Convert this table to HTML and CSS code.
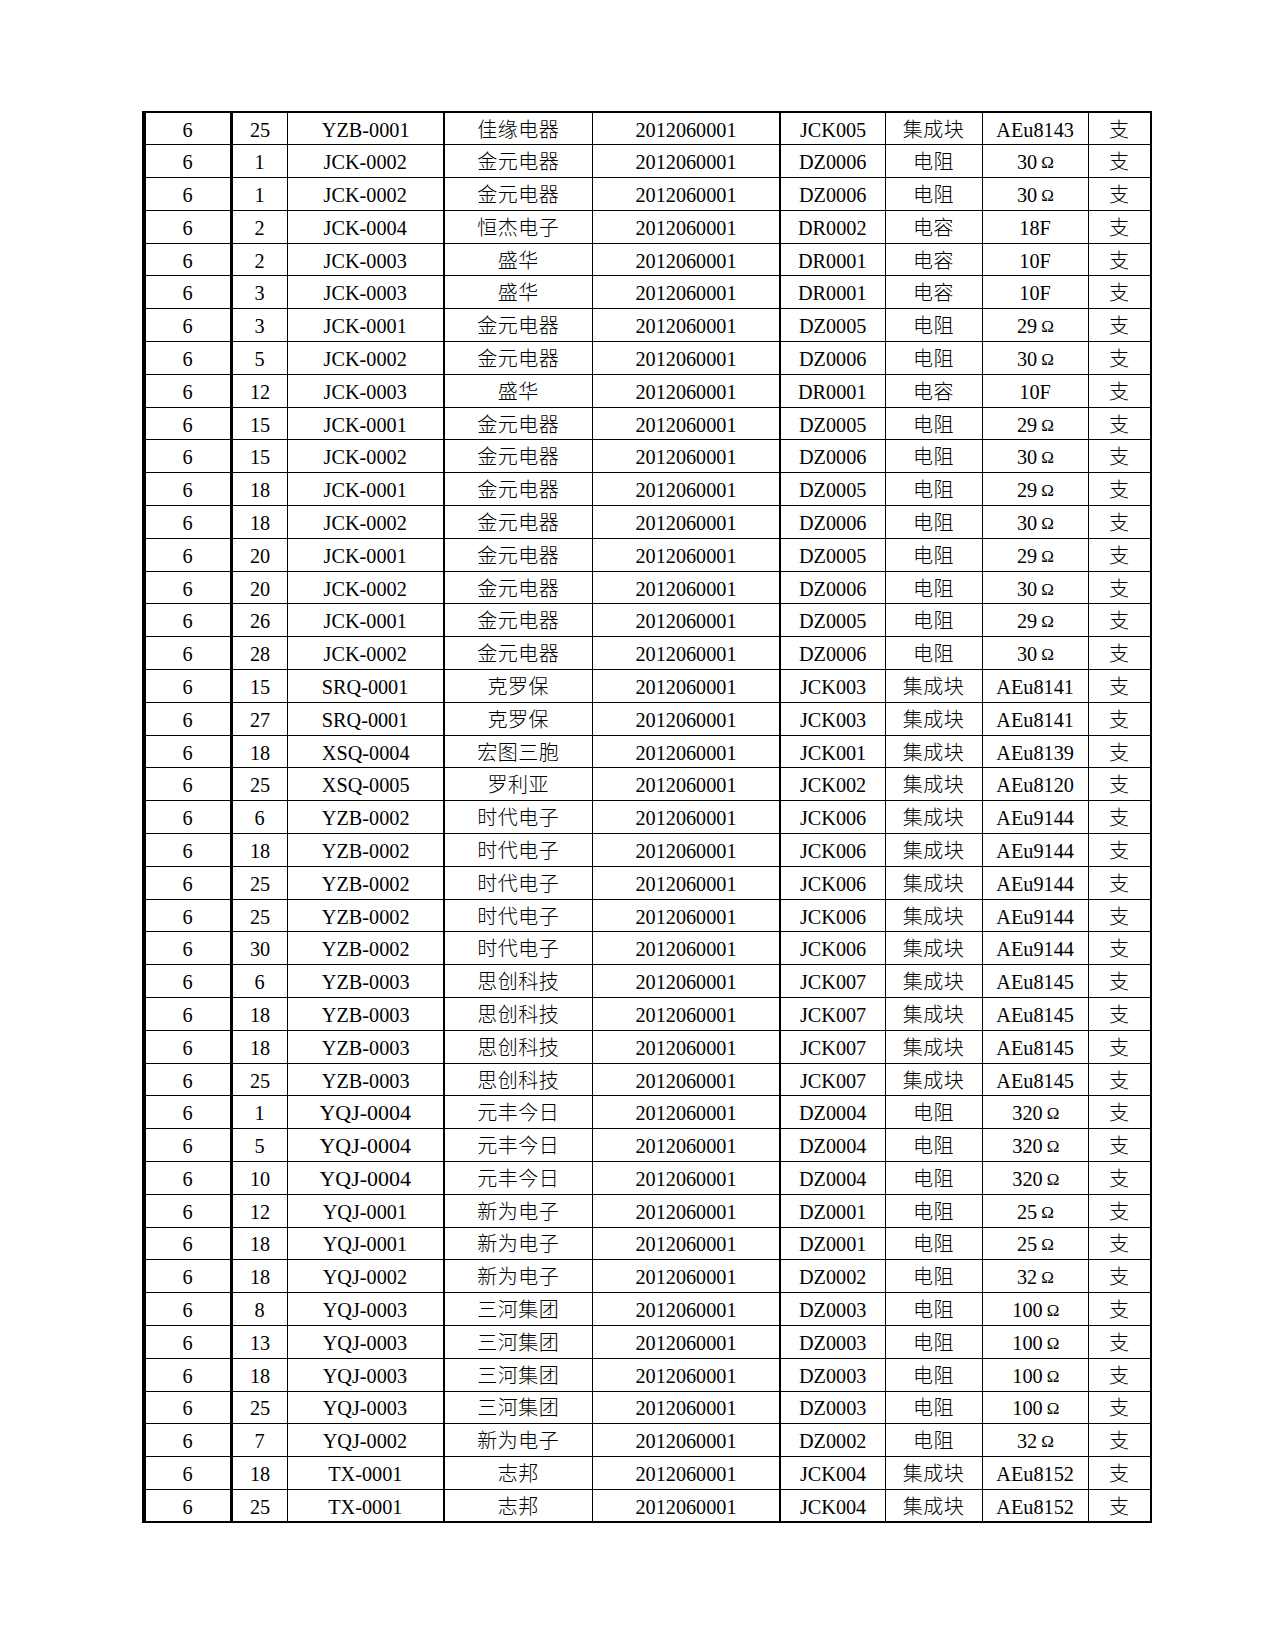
FILE: index.html
```html
<!DOCTYPE html>
<html lang="zh">
<head>
<meta charset="utf-8">
<title>表格</title>
<link rel="stylesheet" href="styles.css">
</head>
<body>
<div class="page">
<table class="sheet">
<colgroup>
<col class="c1"><col class="c2"><col class="c3"><col class="c4"><col class="c5"><col class="c6"><col class="c7"><col class="c8"><col class="c9">
</colgroup>
<tbody>
<tr><td><span class="lat">6</span></td><td><span class="lat">25</span></td><td><span class="lat">YZB-0001</span></td><td class="cjk">佳缘电器</td><td><span class="lat">2012060001</span></td><td><span class="lat">JCK005</span></td><td class="cjk">集成块</td><td><span class="lat">AEu8143</span></td><td class="cjk">支</td></tr>
<tr><td><span class="lat">6</span></td><td><span class="lat">1</span></td><td><span class="lat">JCK-0002</span></td><td class="cjk">金元电器</td><td><span class="lat">2012060001</span></td><td><span class="lat">DZ0006</span></td><td class="cjk">电阻</td><td><span class="lat">30</span><span class="ohm">Ω</span></td><td class="cjk">支</td></tr>
<tr><td><span class="lat">6</span></td><td><span class="lat">1</span></td><td><span class="lat">JCK-0002</span></td><td class="cjk">金元电器</td><td><span class="lat">2012060001</span></td><td><span class="lat">DZ0006</span></td><td class="cjk">电阻</td><td><span class="lat">30</span><span class="ohm">Ω</span></td><td class="cjk">支</td></tr>
<tr><td><span class="lat">6</span></td><td><span class="lat">2</span></td><td><span class="lat">JCK-0004</span></td><td class="cjk">恒杰电子</td><td><span class="lat">2012060001</span></td><td><span class="lat">DR0002</span></td><td class="cjk">电容</td><td><span class="lat">18F</span></td><td class="cjk">支</td></tr>
<tr><td><span class="lat">6</span></td><td><span class="lat">2</span></td><td><span class="lat">JCK-0003</span></td><td class="cjk">盛华</td><td><span class="lat">2012060001</span></td><td><span class="lat">DR0001</span></td><td class="cjk">电容</td><td><span class="lat">10F</span></td><td class="cjk">支</td></tr>
<tr><td><span class="lat">6</span></td><td><span class="lat">3</span></td><td><span class="lat">JCK-0003</span></td><td class="cjk">盛华</td><td><span class="lat">2012060001</span></td><td><span class="lat">DR0001</span></td><td class="cjk">电容</td><td><span class="lat">10F</span></td><td class="cjk">支</td></tr>
<tr><td><span class="lat">6</span></td><td><span class="lat">3</span></td><td><span class="lat">JCK-0001</span></td><td class="cjk">金元电器</td><td><span class="lat">2012060001</span></td><td><span class="lat">DZ0005</span></td><td class="cjk">电阻</td><td><span class="lat">29</span><span class="ohm">Ω</span></td><td class="cjk">支</td></tr>
<tr><td><span class="lat">6</span></td><td><span class="lat">5</span></td><td><span class="lat">JCK-0002</span></td><td class="cjk">金元电器</td><td><span class="lat">2012060001</span></td><td><span class="lat">DZ0006</span></td><td class="cjk">电阻</td><td><span class="lat">30</span><span class="ohm">Ω</span></td><td class="cjk">支</td></tr>
<tr><td><span class="lat">6</span></td><td><span class="lat">12</span></td><td><span class="lat">JCK-0003</span></td><td class="cjk">盛华</td><td><span class="lat">2012060001</span></td><td><span class="lat">DR0001</span></td><td class="cjk">电容</td><td><span class="lat">10F</span></td><td class="cjk">支</td></tr>
<tr><td><span class="lat">6</span></td><td><span class="lat">15</span></td><td><span class="lat">JCK-0001</span></td><td class="cjk">金元电器</td><td><span class="lat">2012060001</span></td><td><span class="lat">DZ0005</span></td><td class="cjk">电阻</td><td><span class="lat">29</span><span class="ohm">Ω</span></td><td class="cjk">支</td></tr>
<tr><td><span class="lat">6</span></td><td><span class="lat">15</span></td><td><span class="lat">JCK-0002</span></td><td class="cjk">金元电器</td><td><span class="lat">2012060001</span></td><td><span class="lat">DZ0006</span></td><td class="cjk">电阻</td><td><span class="lat">30</span><span class="ohm">Ω</span></td><td class="cjk">支</td></tr>
<tr><td><span class="lat">6</span></td><td><span class="lat">18</span></td><td><span class="lat">JCK-0001</span></td><td class="cjk">金元电器</td><td><span class="lat">2012060001</span></td><td><span class="lat">DZ0005</span></td><td class="cjk">电阻</td><td><span class="lat">29</span><span class="ohm">Ω</span></td><td class="cjk">支</td></tr>
<tr><td><span class="lat">6</span></td><td><span class="lat">18</span></td><td><span class="lat">JCK-0002</span></td><td class="cjk">金元电器</td><td><span class="lat">2012060001</span></td><td><span class="lat">DZ0006</span></td><td class="cjk">电阻</td><td><span class="lat">30</span><span class="ohm">Ω</span></td><td class="cjk">支</td></tr>
<tr><td><span class="lat">6</span></td><td><span class="lat">20</span></td><td><span class="lat">JCK-0001</span></td><td class="cjk">金元电器</td><td><span class="lat">2012060001</span></td><td><span class="lat">DZ0005</span></td><td class="cjk">电阻</td><td><span class="lat">29</span><span class="ohm">Ω</span></td><td class="cjk">支</td></tr>
<tr><td><span class="lat">6</span></td><td><span class="lat">20</span></td><td><span class="lat">JCK-0002</span></td><td class="cjk">金元电器</td><td><span class="lat">2012060001</span></td><td><span class="lat">DZ0006</span></td><td class="cjk">电阻</td><td><span class="lat">30</span><span class="ohm">Ω</span></td><td class="cjk">支</td></tr>
<tr><td><span class="lat">6</span></td><td><span class="lat">26</span></td><td><span class="lat">JCK-0001</span></td><td class="cjk">金元电器</td><td><span class="lat">2012060001</span></td><td><span class="lat">DZ0005</span></td><td class="cjk">电阻</td><td><span class="lat">29</span><span class="ohm">Ω</span></td><td class="cjk">支</td></tr>
<tr><td><span class="lat">6</span></td><td><span class="lat">28</span></td><td><span class="lat">JCK-0002</span></td><td class="cjk">金元电器</td><td><span class="lat">2012060001</span></td><td><span class="lat">DZ0006</span></td><td class="cjk">电阻</td><td><span class="lat">30</span><span class="ohm">Ω</span></td><td class="cjk">支</td></tr>
<tr><td><span class="lat">6</span></td><td><span class="lat">15</span></td><td><span class="lat">SRQ-0001</span></td><td class="cjk">克罗保</td><td><span class="lat">2012060001</span></td><td><span class="lat">JCK003</span></td><td class="cjk">集成块</td><td><span class="lat">AEu8141</span></td><td class="cjk">支</td></tr>
<tr><td><span class="lat">6</span></td><td><span class="lat">27</span></td><td><span class="lat">SRQ-0001</span></td><td class="cjk">克罗保</td><td><span class="lat">2012060001</span></td><td><span class="lat">JCK003</span></td><td class="cjk">集成块</td><td><span class="lat">AEu8141</span></td><td class="cjk">支</td></tr>
<tr><td><span class="lat">6</span></td><td><span class="lat">18</span></td><td><span class="lat">XSQ-0004</span></td><td class="cjk">宏图三胞</td><td><span class="lat">2012060001</span></td><td><span class="lat">JCK001</span></td><td class="cjk">集成块</td><td><span class="lat">AEu8139</span></td><td class="cjk">支</td></tr>
<tr><td><span class="lat">6</span></td><td><span class="lat">25</span></td><td><span class="lat">XSQ-0005</span></td><td class="cjk">罗利亚</td><td><span class="lat">2012060001</span></td><td><span class="lat">JCK002</span></td><td class="cjk">集成块</td><td><span class="lat">AEu8120</span></td><td class="cjk">支</td></tr>
<tr><td><span class="lat">6</span></td><td><span class="lat">6</span></td><td><span class="lat">YZB-0002</span></td><td class="cjk">时代电子</td><td><span class="lat">2012060001</span></td><td><span class="lat">JCK006</span></td><td class="cjk">集成块</td><td><span class="lat">AEu9144</span></td><td class="cjk">支</td></tr>
<tr><td><span class="lat">6</span></td><td><span class="lat">18</span></td><td><span class="lat">YZB-0002</span></td><td class="cjk">时代电子</td><td><span class="lat">2012060001</span></td><td><span class="lat">JCK006</span></td><td class="cjk">集成块</td><td><span class="lat">AEu9144</span></td><td class="cjk">支</td></tr>
<tr><td><span class="lat">6</span></td><td><span class="lat">25</span></td><td><span class="lat">YZB-0002</span></td><td class="cjk">时代电子</td><td><span class="lat">2012060001</span></td><td><span class="lat">JCK006</span></td><td class="cjk">集成块</td><td><span class="lat">AEu9144</span></td><td class="cjk">支</td></tr>
<tr><td><span class="lat">6</span></td><td><span class="lat">25</span></td><td><span class="lat">YZB-0002</span></td><td class="cjk">时代电子</td><td><span class="lat">2012060001</span></td><td><span class="lat">JCK006</span></td><td class="cjk">集成块</td><td><span class="lat">AEu9144</span></td><td class="cjk">支</td></tr>
<tr><td><span class="lat">6</span></td><td><span class="lat">30</span></td><td><span class="lat">YZB-0002</span></td><td class="cjk">时代电子</td><td><span class="lat">2012060001</span></td><td><span class="lat">JCK006</span></td><td class="cjk">集成块</td><td><span class="lat">AEu9144</span></td><td class="cjk">支</td></tr>
<tr><td><span class="lat">6</span></td><td><span class="lat">6</span></td><td><span class="lat">YZB-0003</span></td><td class="cjk">思创科技</td><td><span class="lat">2012060001</span></td><td><span class="lat">JCK007</span></td><td class="cjk">集成块</td><td><span class="lat">AEu8145</span></td><td class="cjk">支</td></tr>
<tr><td><span class="lat">6</span></td><td><span class="lat">18</span></td><td><span class="lat">YZB-0003</span></td><td class="cjk">思创科技</td><td><span class="lat">2012060001</span></td><td><span class="lat">JCK007</span></td><td class="cjk">集成块</td><td><span class="lat">AEu8145</span></td><td class="cjk">支</td></tr>
<tr><td><span class="lat">6</span></td><td><span class="lat">18</span></td><td><span class="lat">YZB-0003</span></td><td class="cjk">思创科技</td><td><span class="lat">2012060001</span></td><td><span class="lat">JCK007</span></td><td class="cjk">集成块</td><td><span class="lat">AEu8145</span></td><td class="cjk">支</td></tr>
<tr><td><span class="lat">6</span></td><td><span class="lat">25</span></td><td><span class="lat">YZB-0003</span></td><td class="cjk">思创科技</td><td><span class="lat">2012060001</span></td><td><span class="lat">JCK007</span></td><td class="cjk">集成块</td><td><span class="lat">AEu8145</span></td><td class="cjk">支</td></tr>
<tr><td><span class="lat">6</span></td><td><span class="lat">1</span></td><td><span class="lat wide">YQJ-0004</span></td><td class="cjk">元丰今日</td><td><span class="lat">2012060001</span></td><td><span class="lat">DZ0004</span></td><td class="cjk">电阻</td><td><span class="lat">320</span><span class="ohm">Ω</span></td><td class="cjk">支</td></tr>
<tr><td><span class="lat">6</span></td><td><span class="lat">5</span></td><td><span class="lat wide">YQJ-0004</span></td><td class="cjk">元丰今日</td><td><span class="lat">2012060001</span></td><td><span class="lat">DZ0004</span></td><td class="cjk">电阻</td><td><span class="lat">320</span><span class="ohm">Ω</span></td><td class="cjk">支</td></tr>
<tr><td><span class="lat">6</span></td><td><span class="lat">10</span></td><td><span class="lat wide">YQJ-0004</span></td><td class="cjk">元丰今日</td><td><span class="lat">2012060001</span></td><td><span class="lat">DZ0004</span></td><td class="cjk">电阻</td><td><span class="lat">320</span><span class="ohm">Ω</span></td><td class="cjk">支</td></tr>
<tr><td><span class="lat">6</span></td><td><span class="lat">12</span></td><td><span class="lat">YQJ-0001</span></td><td class="cjk">新为电子</td><td><span class="lat">2012060001</span></td><td><span class="lat">DZ0001</span></td><td class="cjk">电阻</td><td><span class="lat">25</span><span class="ohm">Ω</span></td><td class="cjk">支</td></tr>
<tr><td><span class="lat">6</span></td><td><span class="lat">18</span></td><td><span class="lat">YQJ-0001</span></td><td class="cjk">新为电子</td><td><span class="lat">2012060001</span></td><td><span class="lat">DZ0001</span></td><td class="cjk">电阻</td><td><span class="lat">25</span><span class="ohm">Ω</span></td><td class="cjk">支</td></tr>
<tr><td><span class="lat">6</span></td><td><span class="lat">18</span></td><td><span class="lat">YQJ-0002</span></td><td class="cjk">新为电子</td><td><span class="lat">2012060001</span></td><td><span class="lat">DZ0002</span></td><td class="cjk">电阻</td><td><span class="lat">32</span><span class="ohm">Ω</span></td><td class="cjk">支</td></tr>
<tr><td><span class="lat">6</span></td><td><span class="lat">8</span></td><td><span class="lat">YQJ-0003</span></td><td class="cjk">三河集团</td><td><span class="lat">2012060001</span></td><td><span class="lat">DZ0003</span></td><td class="cjk">电阻</td><td><span class="lat">100</span><span class="ohm">Ω</span></td><td class="cjk">支</td></tr>
<tr><td><span class="lat">6</span></td><td><span class="lat">13</span></td><td><span class="lat">YQJ-0003</span></td><td class="cjk">三河集团</td><td><span class="lat">2012060001</span></td><td><span class="lat">DZ0003</span></td><td class="cjk">电阻</td><td><span class="lat">100</span><span class="ohm">Ω</span></td><td class="cjk">支</td></tr>
<tr><td><span class="lat">6</span></td><td><span class="lat">18</span></td><td><span class="lat">YQJ-0003</span></td><td class="cjk">三河集团</td><td><span class="lat">2012060001</span></td><td><span class="lat">DZ0003</span></td><td class="cjk">电阻</td><td><span class="lat">100</span><span class="ohm">Ω</span></td><td class="cjk">支</td></tr>
<tr><td><span class="lat">6</span></td><td><span class="lat">25</span></td><td><span class="lat">YQJ-0003</span></td><td class="cjk">三河集团</td><td><span class="lat">2012060001</span></td><td><span class="lat">DZ0003</span></td><td class="cjk">电阻</td><td><span class="lat">100</span><span class="ohm">Ω</span></td><td class="cjk">支</td></tr>
<tr><td><span class="lat">6</span></td><td><span class="lat">7</span></td><td><span class="lat">YQJ-0002</span></td><td class="cjk">新为电子</td><td><span class="lat">2012060001</span></td><td><span class="lat">DZ0002</span></td><td class="cjk">电阻</td><td><span class="lat">32</span><span class="ohm">Ω</span></td><td class="cjk">支</td></tr>
<tr><td><span class="lat">6</span></td><td><span class="lat">18</span></td><td><span class="lat">TX-0001</span></td><td class="cjk">志邦</td><td><span class="lat">2012060001</span></td><td><span class="lat">JCK004</span></td><td class="cjk">集成块</td><td><span class="lat">AEu8152</span></td><td class="cjk">支</td></tr>
<tr><td><span class="lat">6</span></td><td><span class="lat">25</span></td><td><span class="lat">TX-0001</span></td><td class="cjk">志邦</td><td><span class="lat">2012060001</span></td><td><span class="lat">JCK004</span></td><td class="cjk">集成块</td><td><span class="lat">AEu8152</span></td><td class="cjk">支</td></tr>
</tbody>
</table>
</div>
</body>
</html>
```
FILE: styles.css
```css
html, body {
  margin: 0;
  padding: 0;
  background: #ffffff;
}

.page {
  padding: 111px 0 0 142px;
}

.sheet {
  border-collapse: collapse;
  table-layout: fixed;
  width: 1007px;
  font-family: "Liberation Serif", "Noto Sans CJK SC", serif;
  color: #000;
}

.c1 { width: 87px; }
.c2 { width: 56px; }
.c3 { width: 157px; }
.c4 { width: 148px; }
.c5 { width: 188px; }
.c6 { width: 105px; }
.c7 { width: 97px; }
.c8 { width: 106px; }
.c9 { width: 63px; }

.sheet tr {
  height: 32.8px;
}

.sheet td {
  border: 1.5px solid #000;
  padding: 0;
  text-align: center;
  vertical-align: middle;
  line-height: 28px;
  white-space: nowrap;
  overflow: hidden;
}

.sheet tr:first-child td {
  border-top-width: 2px;
}

.sheet tr:last-child td {
  border-bottom-width: 2px;
}

.sheet td:first-child {
  border-left-width: 4px;
}

.sheet td:nth-child(2) {
  border-left-width: 3px;
}

.sheet td:nth-child(4) {
  border-left-width: 2px;
}

.sheet td:nth-child(6) {
  border-left-width: 2.5px;
}

.sheet td:last-child {
  border-right-width: 2px;
}

.lat {
  display: inline-block;
  font-family: "Liberation Serif", serif;
  font-size: 22px;
  transform: scaleX(0.92);
  transform-origin: center;
  position: relative;
  top: 2px;
}

.lat.wide {
  transform: scaleX(1);
}

.ohm {
  display: inline-block;
  font-family: "Liberation Serif", serif;
  font-size: 17px;
  margin-left: 3px;
  position: relative;
  top: 1px;
}

.cjk {
  font-family: "Noto Sans CJK SC", sans-serif;
  font-weight: 300;
  font-size: 20px;
  letter-spacing: 0.5px;
}
```
